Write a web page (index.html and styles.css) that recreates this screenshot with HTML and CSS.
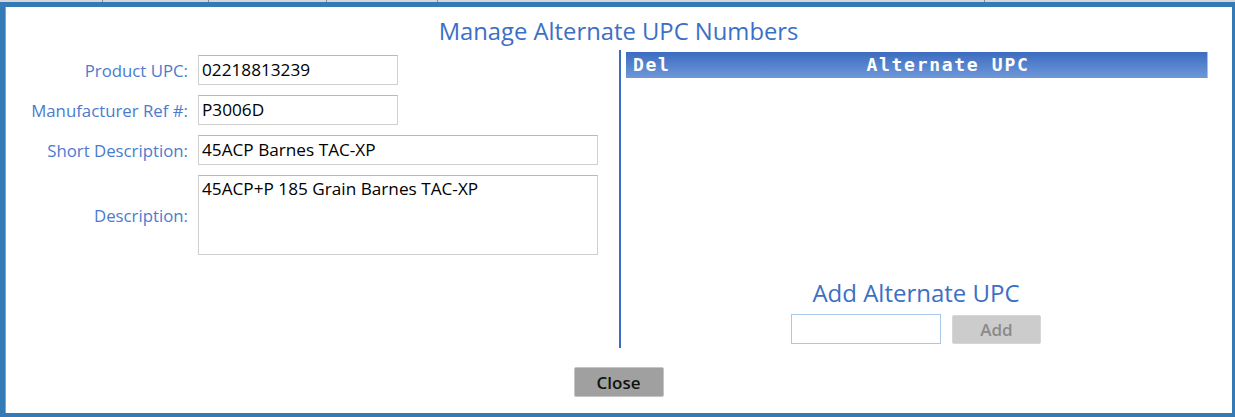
FILE: index.html
```html
<!DOCTYPE html>
<html>
<head>
<meta charset="utf-8">
<link rel="stylesheet" href="styles.css">
</head>
<body>
<div class="backdrop">
  <span class="cell c1"></span><span class="cell c2"></span><span class="cell c3"></span><span class="cell c4"></span><span class="cell c5"></span><span class="cell c6"></span>
</div>
<div class="modal">
  <h1 class="title">Manage Alternate UPC Numbers</h1>
  <div class="body">
    <div class="left">
      <div class="row">
        <label class="lbl">Product UPC:</label>
        <input class="inp short" type="text" value="02218813239">
      </div>
      <div class="row">
        <label class="lbl">Manufacturer Ref #:</label>
        <input class="inp short" type="text" value="P3006D">
      </div>
      <div class="row">
        <label class="lbl">Short Description:</label>
        <input class="inp long" type="text" value="45ACP Barnes TAC-XP">
      </div>
      <div class="row">
        <label class="lbl">Description:</label>
        <textarea class="inp long area">45ACP+P 185 Grain Barnes TAC-XP</textarea>
      </div>
    </div>
    <div class="right">
      <div class="grid-head">
        <span class="col-del">Del</span>
        <span class="col-alt">Alternate UPC</span>
      </div>
      <div class="add">
        <div class="add-title">Add Alternate UPC</div>
        <div class="add-row">
          <input class="add-inp" type="text">
          <button class="add-btn">Add</button>
        </div>
      </div>
    </div>
  </div>
  <div class="footer">
    <button class="close-btn">Close</button>
  </div>
</div>
</body>
</html>
```
FILE: styles.css
```css
* { box-sizing: border-box; }
html, body { margin: 0; padding: 0; }
body {
  width: 1235px;
  height: 417px;
  overflow: hidden;
  background: #fff;
  font-family: "Open Sans", "Noto Sans", sans-serif;
}
.backdrop {
  height: 2px;
  display: flex;
  background: #d6d6d6;
}
.cell { height: 2px; border-right: 1px solid #8a8a8a; }
.c1 { width: 103px; }
.c2 { width: 106px; }
.c3 { width: 118px; }
.c4 { width: 111px; }
.c5 { width: 547px; }
.c6 { flex: 1; border-right: none; }

.modal {
  height: 415px;
  border-style: solid;
  border-color: #337ab7;
  border-width: 5px 3px 4px 5px;
  box-shadow: inset 1px 0 0 #6fa6dc;
  display: flex;
  flex-direction: column;
}
.title {
  margin: 0;
  height: 43px;
  padding-top: 9px;
  font-weight: normal;
  font-size: 23.8px;
  line-height: 30px;
  text-align: center;
  color: #3c6fc6;
}
.body {
  height: 298px;
  display: flex;
}
.left {
  width: 614px;
  padding-top: 5px;
  display: flex;
  flex-direction: column;
  gap: 10px;
}
.row {
  display: flex;
  align-items: center;
  gap: 10px;
}
.lbl {
  width: 183px;
  text-align: right;
  font-size: 16.8px;
  color: #4a7bcf;
  white-space: nowrap;
}
.inp {
  height: 30px;
  border: 1px solid #d0d0d0;
  border-top-color: #b8b8b8;
  padding: 0 3px 2px;
  font-family: "Open Sans", "Noto Sans", sans-serif;
  font-size: 17.2px;
  color: #000;
  background: #fff;
}
.short { width: 200px; }
.long { width: 400px; }
.area {
  height: 80px;
  resize: none;
  padding-top: 2px;
  line-height: 22px;
}
.right {
  flex: 1;
  border-left: 2px solid #3b6cc2;
  padding: 2px 24px 4px 5px;
  display: flex;
  flex-direction: column;
}
.grid-head {
  height: 26px;
  display: flex;
  align-items: center;
  background: linear-gradient(#3c6cc0, #6e98da);
  border-right: 1px solid #a8c0e8;
  color: #fff;
  font-family: "DejaVu Sans Mono", monospace;
  font-weight: bold;
  font-size: 18px;
  letter-spacing: 1.7px;
  padding-bottom: 2px;
}
.col-del { width: 60px; padding-left: 7px; }
.col-alt { flex: 1; text-align: center; padding-left: 3px; }
.add {
  margin-top: auto;
  display: flex;
  flex-direction: column;
  align-items: center;
  padding-right: 2px;
}
.add-title {
  font-size: 24px;
  line-height: 30px;
  color: #3c6fc6;
  margin-bottom: 6px;
}
.add-row {
  display: flex;
  gap: 11px;
  align-items: center;
}
.add-inp {
  width: 150px;
  height: 30px;
  border: 1px solid #a9c9ea;
  background: #fff;
}
.add-btn {
  width: 89px;
  height: 29px;
  border: 1px solid #d6d6d6;
  border-radius: 2px;
  background: #cccccc;
  color: #8a8a8a;
  font-family: "Open Sans", "Noto Sans", sans-serif;
  font-weight: 600;
  font-size: 17px;
  padding: 0;
}
.footer {
  flex: 1;
  display: flex;
  justify-content: center;
  padding-top: 19px;
}
.close-btn {
  width: 90px;
  height: 30px;
  border: 1px solid #c4c4c4;
  border-radius: 2px;
  background: #a0a0a0;
  color: #111;
  font-family: "Open Sans", "Noto Sans", sans-serif;
  font-weight: 600;
  font-size: 17px;
  padding: 0;
}
```
